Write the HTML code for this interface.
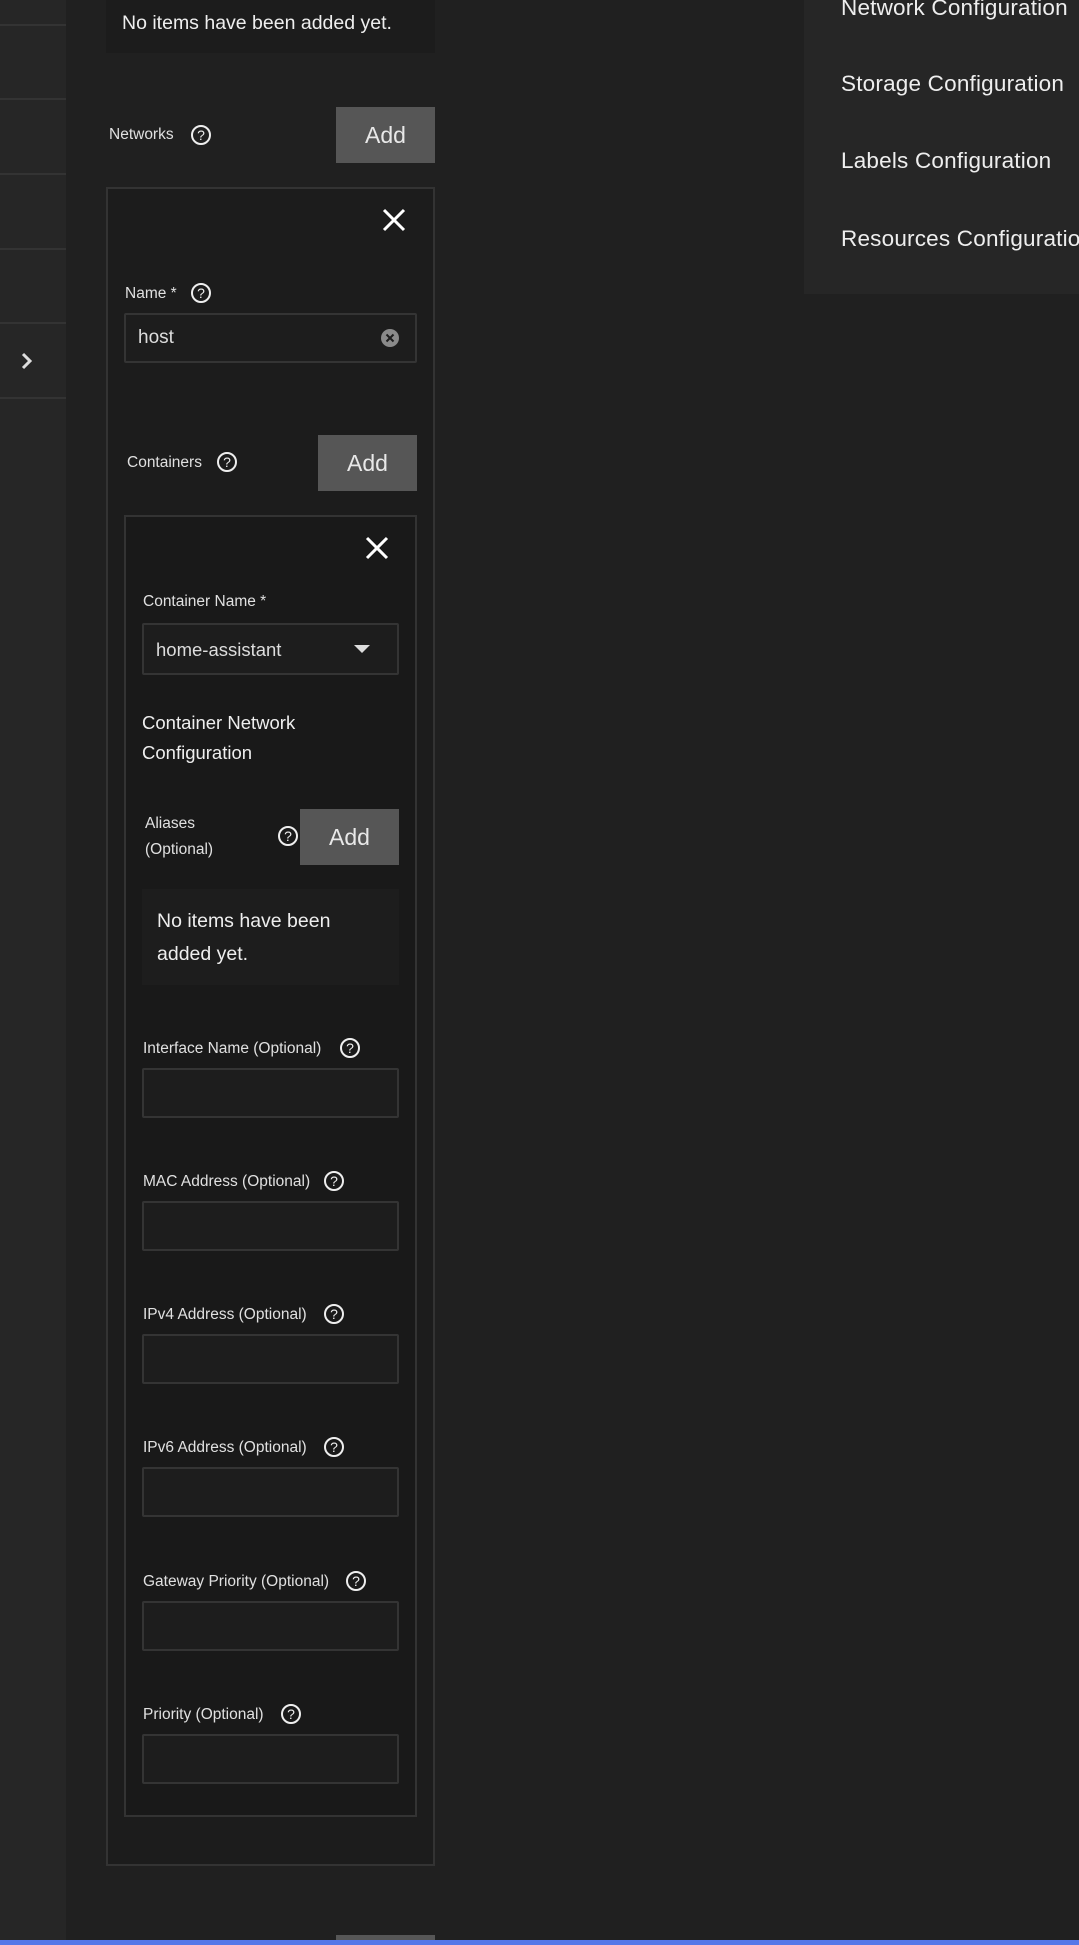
<!DOCTYPE html>
<html><head><meta charset="utf-8"><style>
*{margin:0;padding:0;box-sizing:border-box}
body{width:1079px;height:1945px;background:#202020;position:relative;overflow:hidden;font-family:"Liberation Sans",sans-serif;color:#e8e8e8}
.a{position:absolute}
.line{position:absolute;left:0;width:66px;height:2px;background:#333}
.lbl{position:absolute;font-size:15.5px;color:#e0e0e0;white-space:nowrap}
.inp{position:absolute;left:142px;width:257px;height:50px;background:#1d1d1d;border:2px solid #343434;border-radius:2px}
.btn{position:absolute;width:99px;height:56px;background:#565656;color:#e8e8e8;font-size:23px;display:flex;align-items:center;justify-content:center}
.help{position:absolute;width:22px;height:22px}
.x{position:absolute;width:26px;height:26px}
</style></head><body>
<div class="a" style="left:0;top:0;width:66px;height:1945px;background:#262626"></div>
<div class="line" style="top:24px"></div><div class="line" style="top:98px"></div><div class="line" style="top:173px"></div><div class="line" style="top:248px"></div><div class="line" style="top:322px"></div><div class="line" style="top:397px"></div>
<svg class="a" style="left:18px;top:350px" width="18" height="22" viewBox="0 0 18 22"><path d="M5 4 L12 11 L5 18" stroke="#ddd" stroke-width="3" fill="none"/></svg>

<div class="a" style="left:804px;top:0;width:275px;height:294px;background:#262626"></div>
<div class="a" style="left:841px;top:-5px;font-size:22.5px;color:#eee;white-space:nowrap;letter-spacing:0.2px">Network Configuration</div>
<div class="a" style="left:841px;top:71px;font-size:22.5px;color:#eee;white-space:nowrap;letter-spacing:0.2px">Storage Configuration</div>
<div class="a" style="left:841px;top:148px;font-size:22.5px;color:#eee;white-space:nowrap;letter-spacing:0.2px">Labels Configuration</div>
<div class="a" style="left:841px;top:226px;font-size:22.5px;color:#eee;white-space:nowrap;letter-spacing:0.2px">Resources Configuration</div>

<div class="a" style="left:106px;top:0;width:329px;height:53px;background:#1c1c1c"></div>
<div class="a" style="left:122px;top:12px;font-size:19.5px;color:#eee">No items have been added yet.</div>

<div class="lbl" style="left:109px;top:126px">Networks</div>
<svg class="help" style="left:190px;top:124px" viewBox="0 0 22 22"><circle cx="11" cy="11" r="9" stroke="#eee" stroke-width="2" fill="none"/><text x="11" y="16" font-size="14" text-anchor="middle" fill="#eee" font-family="Liberation Sans">?</text></svg>
<div class="btn" style="left:336px;top:107px">Add</div>

<div class="a" style="left:106px;top:187px;width:329px;height:1679px;background:#1c1c1c;border:2px solid #333"></div>
<svg class="x" style="left:381px;top:207px" viewBox="0 0 26 26"><path d="M3 3L23 23M23 3L3 23" stroke="#fff" stroke-width="3"/></svg>
<div class="lbl" style="left:125px;top:285px">Name *</div>
<svg class="help" style="left:190px;top:282px" viewBox="0 0 22 22"><circle cx="11" cy="11" r="9" stroke="#eee" stroke-width="2" fill="none"/><text x="11" y="16" font-size="14" text-anchor="middle" fill="#eee" font-family="Liberation Sans">?</text></svg>
<div class="inp" style="left:124px;top:313px;width:293px"></div>
<div class="a" style="left:138px;top:327px;font-size:19px;color:#ddd">host</div>
<svg class="a" style="left:381px;top:329px" width="18" height="18" viewBox="0 0 18 18"><circle cx="9" cy="9" r="9" fill="#8a8a8a"/><path d="M5.5 5.5L12.5 12.5M12.5 5.5L5.5 12.5" stroke="#1d1d1d" stroke-width="2"/></svg>

<div class="lbl" style="left:127px;top:454px">Containers</div>
<svg class="help" style="left:216px;top:451px" viewBox="0 0 22 22"><circle cx="11" cy="11" r="9" stroke="#eee" stroke-width="2" fill="none"/><text x="11" y="16" font-size="14" text-anchor="middle" fill="#eee" font-family="Liberation Sans">?</text></svg>
<div class="btn" style="left:318px;top:435px">Add</div>

<div class="a" style="left:124px;top:515px;width:293px;height:1302px;background:#191919;border:2px solid #333"></div>
<svg class="x" style="left:364px;top:535px" viewBox="0 0 26 26"><path d="M3 3L23 23M23 3L3 23" stroke="#fff" stroke-width="3"/></svg>
<div class="lbl" style="left:143px;top:593px">Container Name *</div>
<div class="inp" style="top:623px;height:52px"></div>
<div class="a" style="left:156px;top:639px;font-size:18.5px;color:#ddd">home-assistant</div>
<svg class="a" style="left:354px;top:644px" width="16" height="10" viewBox="0 0 16 10"><path d="M0 1H16L8 9Z" fill="#ddd"/></svg>
<div class="a" style="left:142px;top:708px;font-size:18.5px;line-height:30px;color:#eee">Container Network<br>Configuration</div>
<div class="lbl" style="left:145px;top:811px;line-height:26px">Aliases<br>(Optional)</div>
<svg class="help" style="left:277px;top:825px" viewBox="0 0 22 22"><circle cx="11" cy="11" r="9" stroke="#eee" stroke-width="2" fill="none"/><text x="11" y="16" font-size="14" text-anchor="middle" fill="#eee" font-family="Liberation Sans">?</text></svg>
<div class="btn" style="left:300px;top:809px">Add</div>
<div class="a" style="left:142px;top:889px;width:257px;height:96px;background:#1d1d1d"></div>
<div class="a" style="left:157px;top:905px;font-size:19.5px;line-height:33px;color:#eee">No items have been<br>added yet.</div>

<div class="lbl" style="left:143px;top:1040px">Interface Name (Optional)</div>
<svg class="help" style="left:339px;top:1037px" viewBox="0 0 22 22"><circle cx="11" cy="11" r="9" stroke="#eee" stroke-width="2" fill="none"/><text x="11" y="16" font-size="14" text-anchor="middle" fill="#eee" font-family="Liberation Sans">?</text></svg>
<div class="inp" style="top:1068px"></div>

<div class="lbl" style="left:143px;top:1173px">MAC Address (Optional)</div>
<svg class="help" style="left:323px;top:1170px" viewBox="0 0 22 22"><circle cx="11" cy="11" r="9" stroke="#eee" stroke-width="2" fill="none"/><text x="11" y="16" font-size="14" text-anchor="middle" fill="#eee" font-family="Liberation Sans">?</text></svg>
<div class="inp" style="top:1201px"></div>

<div class="lbl" style="left:143px;top:1306px">IPv4 Address (Optional)</div>
<svg class="help" style="left:323px;top:1303px" viewBox="0 0 22 22"><circle cx="11" cy="11" r="9" stroke="#eee" stroke-width="2" fill="none"/><text x="11" y="16" font-size="14" text-anchor="middle" fill="#eee" font-family="Liberation Sans">?</text></svg>
<div class="inp" style="top:1334px"></div>

<div class="lbl" style="left:143px;top:1439px">IPv6 Address (Optional)</div>
<svg class="help" style="left:323px;top:1436px" viewBox="0 0 22 22"><circle cx="11" cy="11" r="9" stroke="#eee" stroke-width="2" fill="none"/><text x="11" y="16" font-size="14" text-anchor="middle" fill="#eee" font-family="Liberation Sans">?</text></svg>
<div class="inp" style="top:1467px"></div>

<div class="lbl" style="left:143px;top:1573px">Gateway Priority (Optional)</div>
<svg class="help" style="left:345px;top:1570px" viewBox="0 0 22 22"><circle cx="11" cy="11" r="9" stroke="#eee" stroke-width="2" fill="none"/><text x="11" y="16" font-size="14" text-anchor="middle" fill="#eee" font-family="Liberation Sans">?</text></svg>
<div class="inp" style="top:1601px"></div>

<div class="lbl" style="left:143px;top:1706px">Priority (Optional)</div>
<svg class="help" style="left:280px;top:1703px" viewBox="0 0 22 22"><circle cx="11" cy="11" r="9" stroke="#eee" stroke-width="2" fill="none"/><text x="11" y="16" font-size="14" text-anchor="middle" fill="#eee" font-family="Liberation Sans">?</text></svg>
<div class="inp" style="top:1734px"></div>

<div class="a" style="left:336px;top:1935px;width:99px;height:6px;background:#565656"></div>
<div class="a" style="left:0;top:1940px;width:1079px;height:5px;background:#5577e8"></div>
</body></html>
